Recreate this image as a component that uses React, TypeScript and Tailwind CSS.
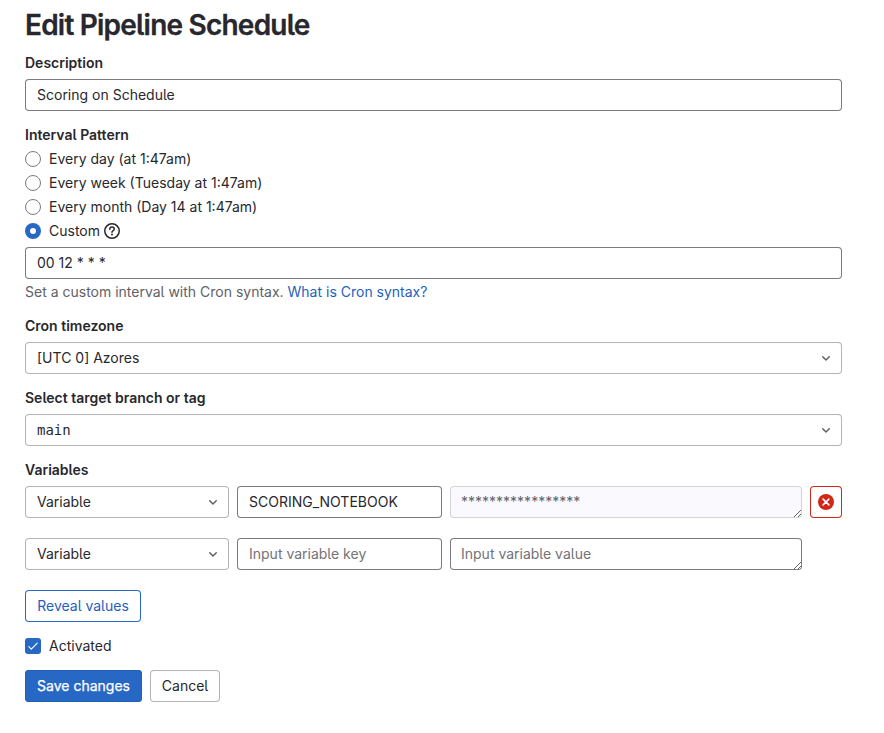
import type { ReactNode } from "react";

const field =
  "block h-8 rounded-[4px] bg-white px-3 text-sm leading-4 text-[#28272d] outline-none placeholder:text-[#737278] placeholder:opacity-100";

function Chevron() {
  return (
    <svg className="size-4 shrink-0" viewBox="0 0 16 16" fill="none" stroke="#626168" strokeWidth="1.5" strokeLinecap="round" strokeLinejoin="round">
      <path d="M4.75 6.75 8 10l3.25-3.25" />
    </svg>
  );
}

function Label({ children }: { children: ReactNode }) {
  return <div className="mb-2 text-sm leading-4 font-semibold">{children}</div>;
}

function Dropdown({ children, className }: { children: ReactNode; className: string }) {
  return (
    <button
      type="button"
      className={`flex h-8 items-center justify-between rounded-[4px] bg-white pr-2 pl-3 text-left text-sm leading-4 shadow-[inset_0_0_0_1px_#b4b4b8] ${className}`}
    >
      {children}
      <Chevron />
    </button>
  );
}

function Radio({ label, checked, children }: { label: string; checked?: boolean; children?: ReactNode }) {
  return (
    <div className="flex h-6 items-center">
      <span
        className={
          checked
            ? "flex size-4 items-center justify-center rounded-full bg-[#2768c4]"
            : "size-4 rounded-full border border-[#7b7a80] bg-white"
        }
      >
        {checked && <span className="size-1.5 rounded-full bg-white" />}
      </span>
      <span className="ml-2 text-sm leading-4">{label}</span>
      {children}
    </div>
  );
}

function HelpIcon() {
  return (
    <svg className="ml-1 size-4" viewBox="0 0 16 16" fill="none" stroke="#28272d" strokeWidth="1.5" strokeLinecap="round" strokeLinejoin="round">
      <circle cx="8" cy="8" r="7.25" />
      <path d="M5.75 6.3C5.75 5 6.7 4.1 8 4.1s2.25.85 2.25 2.05C10.25 7.6 8 7.7 8 9.2" />
      <circle cx="8" cy="11.6" r="1" fill="#28272d" stroke="none" />
    </svg>
  );
}

export default function App() {
  return (
    <main className="min-h-[733px] bg-white pt-[9px] pl-[25px] font-['Inter',sans-serif] text-[#28272d] [font-feature-settings:'cv05']">
      <form className="w-[817px]">
        <h1 className="mb-[14px] text-[28px] leading-8 font-semibold tracking-[-0.028em] [-webkit-text-stroke:0.3px_#28272d]">Edit Pipeline Schedule</h1>

        <Label>Description</Label>
        <input className={`${field} w-full pb-[2px] shadow-[inset_0_0_0_1px_#7b7a80]`} defaultValue="Scoring on Schedule" />

        <div className="mt-4">
          <div className="mb-1 text-sm leading-4 font-semibold">Interval Pattern</div>
          <Radio label="Every day (at 1:47am)" />
          <Radio label="Every week (Tuesday at 1:47am)" />
          <Radio label="Every month (Day 14 at 1:47am)" />
          <Radio label="Custom" checked>
            <HelpIcon />
          </Radio>
        </div>
        <input className={`${field} mt-1 w-full pb-[2px] shadow-[inset_0_0_0_1px_#7b7a80]`} defaultValue="00 12 * * *" />
        <p className="mt-[5px] mb-[18px] text-sm leading-4 text-[#626168]">
          Set a custom interval with Cron syntax. <a className="text-[#1f5fbf]">What is Cron syntax?</a>
        </p>

        <Label>Cron timezone</Label>
        <Dropdown className="mb-4 w-full">[UTC 0] Azores</Dropdown>

        <Label>Select target branch or tag</Label>
        <Dropdown className="mb-4 w-full">
          <span className="font-['DejaVu_Sans_Mono',monospace]">main</span>
        </Dropdown>

        <Label>Variables</Label>
        <div className="mb-5 flex gap-2">
          <Dropdown className="w-[204px]">Variable</Dropdown>
          <input className={`${field} w-[205px] pb-[2px] shadow-[inset_0_0_0_1px_#7b7a80]`} defaultValue="SCORING_NOTEBOOK" />
          <textarea
            className="block h-8 w-[352px] resize overflow-hidden rounded-[4px] bg-[#faf9fe] py-2 pr-3 pl-[11px] text-sm leading-4 text-[#626168] shadow-[inset_0_0_0_1px_#d4d4d8]"
            defaultValue="*****************"
          />
          <button type="button" className="flex size-8 items-center justify-center rounded-[4px] bg-white shadow-[inset_0_0_0_1px_#d02719]">
            <svg className="size-4" viewBox="0 0 16 16">
              <circle cx="8" cy="8" r="8" fill="#d02719" />
              <path d="m5.1 5.1 5.8 5.8m0-5.8-5.8 5.8" stroke="#fff" strokeWidth="1.5" strokeLinecap="round" />
            </svg>
          </button>
        </div>
        <div className="mb-5 flex gap-2">
          <Dropdown className="w-[204px]">Variable</Dropdown>
          <input className={`${field} w-[205px] pb-[2px] shadow-[inset_0_0_0_1px_#7b7a80]`} placeholder="Input variable key" />
          <textarea
            className={`${field} w-[352px] resize overflow-hidden py-2 pl-[11px] shadow-[inset_0_0_0_1px_#7b7a80]`}
            placeholder="Input variable value"
          />
        </div>

        <button type="button" className="mb-4 flex h-8 w-[116px] items-center justify-center rounded-[4px] text-sm leading-4 text-[#1f5fbf] shadow-[inset_0_0_0_1px_#2768c4]">
          Reveal values
        </button>

        <div className="mb-4 flex h-4 items-center gap-2 text-sm leading-4">
          <span className="flex size-4 items-center justify-center rounded-[3px] bg-[#2768c4]">
            <svg className="size-4" viewBox="0 0 16 16" fill="none" stroke="#fff" strokeWidth="1.1" strokeLinecap="round" strokeLinejoin="round">
              <path d="m3.8 8.6 2.5 2.5 5.9-6" />
            </svg>
          </span>
          Activated
        </div>

        <div className="flex gap-2 text-sm leading-4">
          <button type="button" className="h-8 w-[117px] rounded-[4px] bg-[#2768c4] text-white shadow-[inset_0_0_0_1px_#2360b8] [-webkit-text-stroke:0.25px_white]">
            Save changes
          </button>
          <button type="button" className="h-8 w-[70px] rounded-[4px] bg-white shadow-[inset_0_0_0_1px_#b4b4b8]">
            Cancel
          </button>
        </div>
      </form>
    </main>
  );
}
